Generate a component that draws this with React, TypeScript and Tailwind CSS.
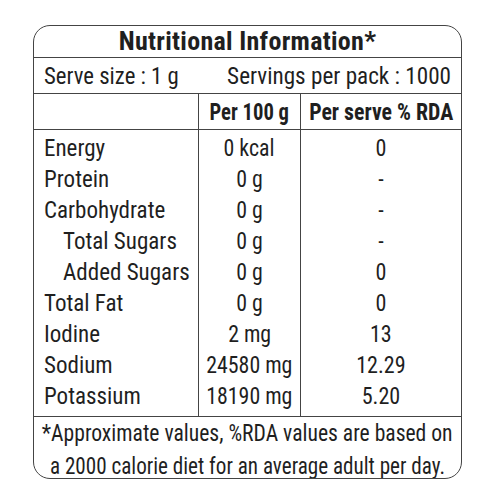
const font = "font-['Roboto',sans-serif] font-stretch-condensed"

type Row = { name: string; per100: string; rda: string; indent?: boolean }

const rows: Row[] = [
  { name: "Energy", per100: "0 kcal", rda: "0" },
  { name: "Protein", per100: "0 g", rda: "-" },
  { name: "Carbohydrate", per100: "0 g", rda: "-" },
  { name: "Total Sugars", per100: "0 g", rda: "-", indent: true },
  { name: "Added Sugars", per100: "0 g", rda: "0", indent: true },
  { name: "Total Fat", per100: "0 g", rda: "0" },
  { name: "Iodine", per100: "2 mg", rda: "13" },
  { name: "Sodium", per100: "24580 mg", rda: "12.29" },
  { name: "Potassium", per100: "18190 mg", rda: "5.20" },
]

const line = "border-[#444]"

export default function App() {
  return (
    <div className={`w-[500px] h-[500px] bg-white pt-[25px] pl-[33px] text-[#1f1f1f] ${font}`}>
      <div className={`w-[429px] h-[454px] border-[1.5px] ${line} rounded-[17px] flex flex-col overflow-hidden`}>
        <div className={`h-[32px] shrink-0 flex items-center justify-center border-b-[1.5px] ${line} font-bold text-[26px] tracking-[0.3px]`}>
          <span className="whitespace-nowrap">Nutritional Information*</span>
        </div>
        <div className={`h-[36px] shrink-0 flex items-center justify-between px-[10px] border-b-[1.5px] ${line} text-[24px]`}>
          <span className="shrink-0 whitespace-nowrap origin-left [transform:scaleX(0.95)]">Serve size : 1 g</span>
          <span className="shrink-0 whitespace-nowrap origin-right [transform:scaleX(0.965)]">Servings per pack : 1000</span>
        </div>
        <div className="grid grid-cols-[165px_102px_1fr] text-[24px]">
          <div className={`h-[36px] border-r-[1.5px] border-b-[1.5px] ${line}`} />
          <div className={`h-[36px] flex items-center justify-center font-bold border-r-[1.5px] border-b-[1.5px] ${line}`}>
            <span className="shrink-0 whitespace-nowrap [transform:scaleX(0.86)]">Per 100 g</span>
          </div>
          <div className={`h-[36px] flex items-center justify-center font-bold border-b-[1.5px] ${line}`}>
            <span className="shrink-0 whitespace-nowrap [transform:scaleX(0.91)]">Per serve % RDA</span>
          </div>
          <div className={`h-[2px] border-r-[1.5px] ${line}`} />
          <div className={`h-[2px] border-r-[1.5px] ${line}`} />
          <div className="h-[2px]" />
          {rows.map((r) => (
            <>
              <div
                key={r.name + "a"}
                className={`h-[31px] flex items-center border-r-[1.5px] ${line} ${r.indent ? "pl-[29px]" : "pl-[10px]"}`}
              >
                <span className="shrink-0 whitespace-nowrap origin-left [transform:scaleX(0.96)]">{r.name}</span>
              </div>
              <div key={r.name + "b"} className={`h-[31px] flex items-center justify-center border-r-[1.5px] ${line}`}>
                <span className="shrink-0 whitespace-nowrap [transform:scaleX(0.91)]">{r.per100}</span>
              </div>
              <div key={r.name + "c"} className="h-[31px] flex items-center justify-center">
                <span className="shrink-0 whitespace-nowrap [transform:scaleX(0.92)]">{r.rda}</span>
              </div>
            </>
          ))}
          <div className={`h-[5px] border-r-[1.5px] ${line}`} />
          <div className={`h-[5px] border-r-[1.5px] ${line}`} />
          <div className="h-[5px]" />
        </div>
        <div className={`flex-1 border-t-[1.5px] ${line} flex flex-col items-center justify-center text-[24px] leading-[33px] text-center`}>
          <span className="shrink-0 whitespace-nowrap [transform:scaleX(0.9)]">*Approximate values, %RDA values are based on</span>
          <span className="shrink-0 whitespace-nowrap [transform:scaleX(0.88)]">a 2000 calorie diet for an average adult per day.</span>
        </div>
      </div>
    </div>
  )
}
